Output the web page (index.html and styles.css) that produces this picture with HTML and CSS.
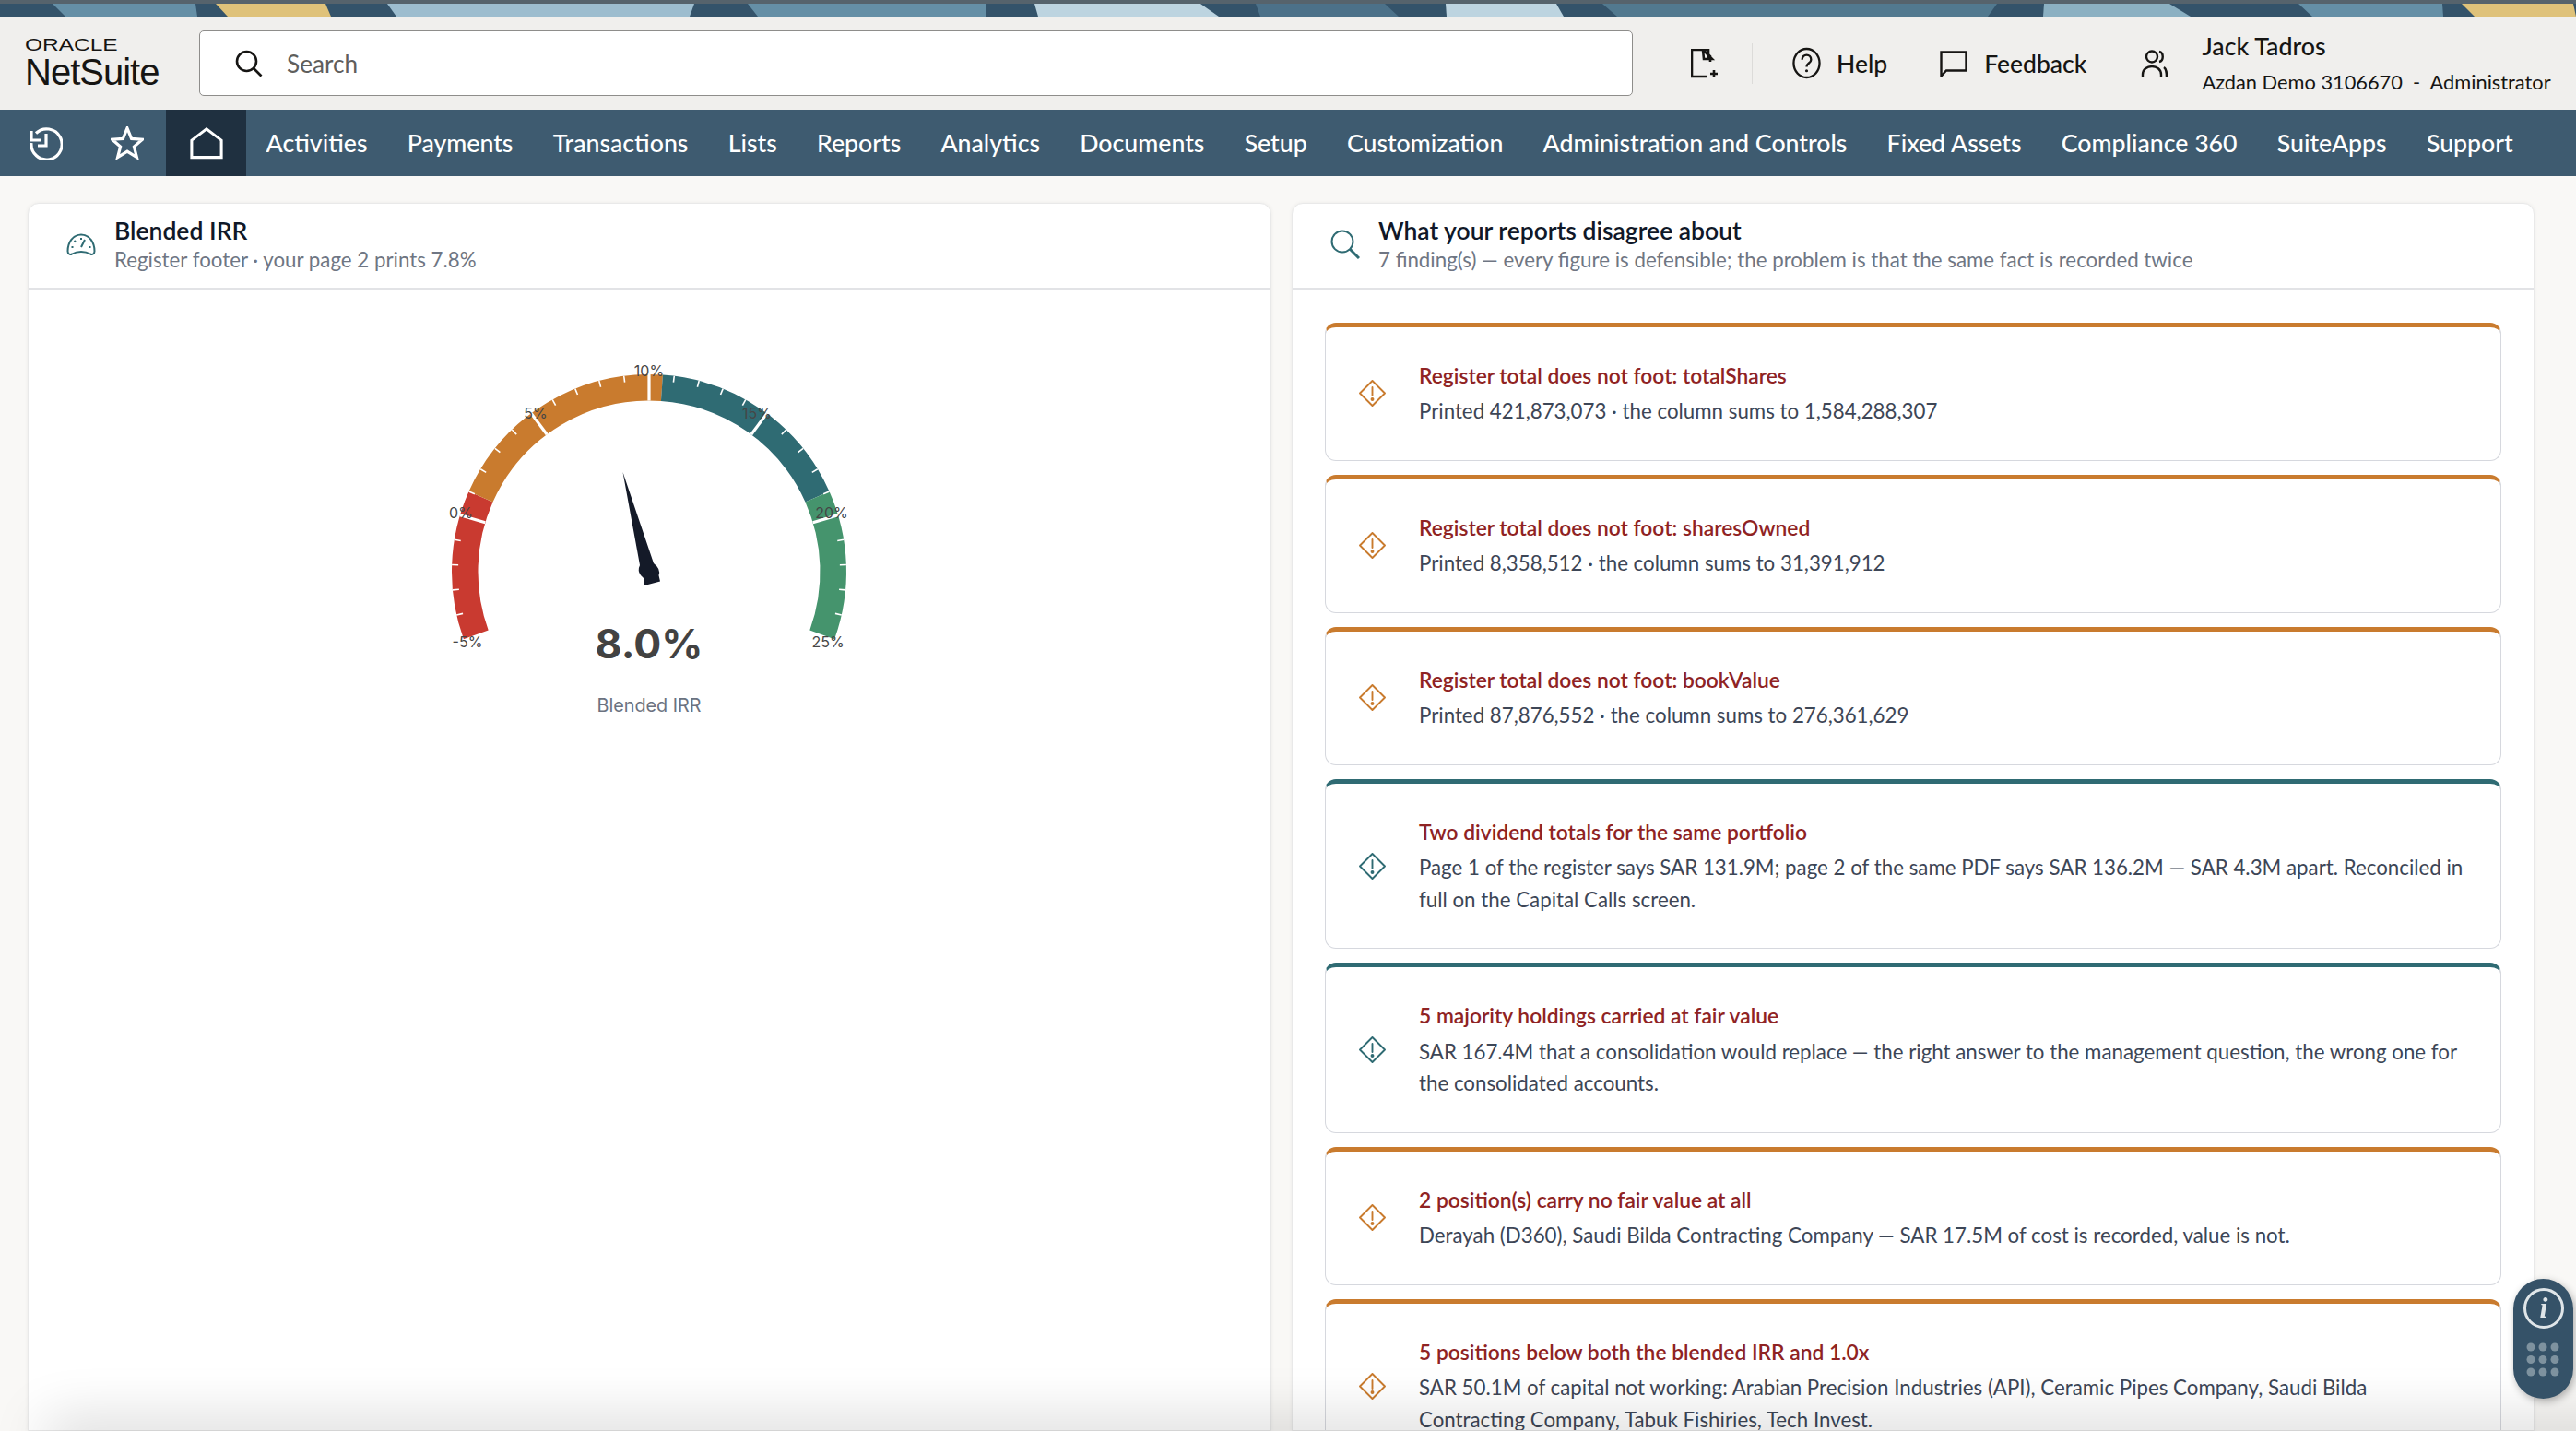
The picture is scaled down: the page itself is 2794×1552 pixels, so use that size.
FILE: index.html
```html
<!DOCTYPE html>
<html lang="en">
<head>
<meta charset="utf-8">
<title>NetSuite - Blended IRR</title>
<link rel="stylesheet" href="styles.css">
</head>
<body>
<svg class="banner" viewBox="0 0 2794 14" preserveAspectRatio="none" aria-hidden="true">
  <rect class="b-dark" width="2794" height="14"/>
  <polygon class="b-mid" points="57,0 71,14 214,14 212,0"/>
  <polygon class="b-yel" points="234,0 247,14 359,14 353,0"/>
  <polygon class="b-lt" points="420,0 430,14 748,14 753,0"/>
  <polygon class="b-mid" points="811,0 822,14 1069,14 1069,0"/>
  <polygon class="b-pale" points="1122,0 1126,14 1322,14 1302,0"/>
  <polygon class="b-deep" points="1362,0 1367,14 1517,14 1502,0"/>
  <polygon class="b-pale" points="1568,0 1569,14 1696,14 1688,0"/>
  <polygon class="b-deep2" points="1738,0 1754,14 2156,14 2166,0"/>
  <polygon class="b-lt2" points="2217,0 2216,14 2376,14 2353,0"/>
  <polygon class="b-mid" points="2493,0 2508,14 2650,14 2649,0"/>
  <polygon class="b-yel" points="2670,0 2684,14 2794,14 2791,0"/>
</svg>

<header class="topbar">
  <div class="logo">
    <span class="logo-oracle">ORACLE</span>
    <span class="logo-netsuite">NetSuite</span>
  </div>
  <div class="search">
    <svg class="search-icon" viewBox="0 0 30 30"><circle cx="12.5" cy="12.5" r="10.5"/><line x1="20" y1="20" x2="28.5" y2="28.5"/></svg>
    <span>Search</span>
  </div>
  <svg class="doc-icon" viewBox="0 0 30 32"><path d="M19 12V1H1v29h17"/><path d="M13 1l10 10h-9z M13 1l8 7v6"/><path class="thick" d="M25 23v8M21 27h8"/></svg>
  <span class="sep"></span>
  <div class="tool help">
    <svg viewBox="0 0 32 36"><ellipse cx="16" cy="18" rx="14.5" ry="16"/><path d="M11 14c0-7 10-7 10 0 0 4-5 4-5 8"/><circle class="dot" cx="16" cy="26.5" r="1.6"/></svg>
    <span>Help</span>
  </div>
  <div class="tool feedback">
    <svg viewBox="0 0 30 30"><path d="M1.5 28.5V2.5h27v20H7z"/></svg>
    <span>Feedback</span>
  </div>
  <svg class="users-icon" viewBox="0 0 30 30"><circle cx="12" cy="7.5" r="6"/><path d="M2 30v-3c0-12 20-12 20 0v3"/><path d="M20 2c5 1 5 10 0 11"/><path d="M25 19c3 2 3 6 3 11"/></svg>
  <div class="user">
    <div class="user-name">Jack Tadros</div>
    <div class="user-role">Azdan Demo 3106670 &nbsp;-&nbsp; Administrator</div>
  </div>
</header>

<nav class="navbar">
  <a class="nav-ico nav-history">
    <svg viewBox="0 0 36 36"><path d="M7 7.5A16.6 16.6 0 1 1 2 18"/><path d="M2 5v10h10"/><path d="M18 8v13H9" /></svg>
  </a>
  <a class="nav-ico nav-star">
    <svg viewBox="0 0 36 36"><polygon points="18,2 22.6,13.4 34.4,14.2 25.4,22 28.4,33.6 18,27.2 7.6,33.6 10.6,22 1.6,14.2 13.4,13.4"/></svg>
  </a>
  <a class="nav-ico nav-home">
    <svg viewBox="0 0 38 36"><path d="M2 34.5V15L19 2l17 13v19.500z"/></svg>
  </a>
  <a class="nav-item">Activities</a>
  <a class="nav-item">Payments</a>
  <a class="nav-item">Transactions</a>
  <a class="nav-item">Lists</a>
  <a class="nav-item">Reports</a>
  <a class="nav-item">Analytics</a>
  <a class="nav-item">Documents</a>
  <a class="nav-item">Setup</a>
  <a class="nav-item">Customization</a>
  <a class="nav-item">Administration and Controls</a>
  <a class="nav-item">Fixed Assets</a>
  <a class="nav-item">Compliance 360</a>
  <a class="nav-item">SuiteApps</a>
  <a class="nav-item">Support</a>
</nav>

<main class="main">
  <section class="card">
    <div class="card-head">
      <svg class="head-ico" viewBox="0 0 32 24"><path d="M6 22.500c6-3.500 14-3.500 20 0 2 1 4.500 0 4.500-3C30.500 10 25 1.500 16 1.500S1.500 10 1.500 19.500c0 3 2.500 4 4.500 3z"/><path d="M16 15l4-8M16 5v2M8.500 8l1.500 1.500M5.500 15h2M24.500 15h2"/></svg>
      <div>
        <div class="card-title">Blended IRR</div>
        <div class="card-sub">Register footer · your page 2 prints 7.8%</div>
      </div>
    </div>
    <div class="gauge-wrap">
      <svg class="gauge" viewBox="-240 -240 480 420">
        <circle class="arc arc-red" r="199.750" pathLength="360" stroke-dasharray="44 316" transform="rotate(160)"/>
        <circle class="arc arc-orange" r="199.750" pathLength="360" stroke-dasharray="70 290" transform="rotate(204)"/>
        <circle class="arc arc-teal" r="199.750" pathLength="360" stroke-dasharray="62 298" transform="rotate(274)"/>
        <circle class="arc arc-green" r="199.750" pathLength="360" stroke-dasharray="44 316" transform="rotate(336)"/>
        <g class="minor">
          <line y1="-214" y2="-207" transform="rotate(-102.67)"/><line y1="-214" y2="-207" transform="rotate(-95.33)"/><line y1="-214" y2="-207" transform="rotate(-88)"/><line y1="-214" y2="-207" transform="rotate(-80.67)"/>
          <line y1="-214" y2="-207" transform="rotate(-66)"/><line y1="-214" y2="-207" transform="rotate(-58.67)"/><line y1="-214" y2="-207" transform="rotate(-51.33)"/><line y1="-214" y2="-207" transform="rotate(-44)"/>
          <line y1="-214" y2="-207" transform="rotate(-29.33)"/><line y1="-214" y2="-207" transform="rotate(-22)"/><line y1="-214" y2="-207" transform="rotate(-14.67)"/><line y1="-214" y2="-207" transform="rotate(-7.33)"/>
          <line y1="-214" y2="-207" transform="rotate(7.33)"/><line y1="-214" y2="-207" transform="rotate(14.67)"/><line y1="-214" y2="-207" transform="rotate(22)"/><line y1="-214" y2="-207" transform="rotate(29.33)"/>
          <line y1="-214" y2="-207" transform="rotate(44)"/><line y1="-214" y2="-207" transform="rotate(51.33)"/><line y1="-214" y2="-207" transform="rotate(58.67)"/><line y1="-214" y2="-207" transform="rotate(66)"/>
          <line y1="-214" y2="-207" transform="rotate(80.67)"/><line y1="-214" y2="-207" transform="rotate(88)"/><line y1="-214" y2="-207" transform="rotate(95.33)"/><line y1="-214" y2="-207" transform="rotate(102.67)"/>
        </g>
        <g class="major">
          <line y1="-214" y2="-185.500" transform="rotate(-73.33)"/><line y1="-214" y2="-185.500" transform="rotate(-36.67)"/><line y1="-214" y2="-185.500"/><line y1="-214" y2="-185.500" transform="rotate(36.67)"/><line y1="-214" y2="-185.500" transform="rotate(73.33)"/>
        </g>
        <g class="tick-labels">
          <text x="-197" y="75.500">-5%</text><text x="-204" y="-64">0%</text><text x="-123" y="-172">5%</text><text x="0" y="-218">10%</text><text x="117" y="-172">15%</text><text x="198" y="-64">20%</text><text x="194" y="75.500">25%</text>
        </g>
        <path class="needle" d="M-28.500-108L-10-7Q-13-1-9 4L-5 8L-5 15L12 10.500L10.500 4Q13-3 5-9Z"/>
        <text class="gauge-value" x="0" y="78">8.0%</text>
        <text class="gauge-label" x="0" y="145">Blended IRR</text>
      </svg>
    </div>
  </section>

  <section class="card">
    <div class="card-head head-wide">
      <svg class="head-ico search-teal" viewBox="0 0 32 32"><circle cx="13" cy="13" r="11.500"/><line class="thick" x1="21" y1="21" x2="31" y2="31"/></svg>
      <div>
        <div class="card-title">What your reports disagree about</div>
        <div class="card-sub">7 finding(s) — every figure is defensible; the problem is that the same fact is recorded twice</div>
      </div>
    </div>
    <div class="findings">
      <article class="finding warn">
        <svg class="diamond" viewBox="0 0 29 29"><path d="M14.500 1L28 14.500 14.500 28 1 14.500z"/><path d="M14.500 8v9"/><circle cx="14.500" cy="21" r="1"/></svg>
        <div><h3>Register total does not foot: totalShares</h3><p>Printed 421,873,073 · the column sums to 1,584,288,307</p></div>
      </article>
      <article class="finding warn">
        <svg class="diamond" viewBox="0 0 29 29"><path d="M14.500 1L28 14.500 14.500 28 1 14.500z"/><path d="M14.500 8v9"/><circle cx="14.500" cy="21" r="1"/></svg>
        <div><h3>Register total does not foot: sharesOwned</h3><p>Printed 8,358,512 · the column sums to 31,391,912</p></div>
      </article>
      <article class="finding warn">
        <svg class="diamond" viewBox="0 0 29 29"><path d="M14.500 1L28 14.500 14.500 28 1 14.500z"/><path d="M14.500 8v9"/><circle cx="14.500" cy="21" r="1"/></svg>
        <div><h3>Register total does not foot: bookValue</h3><p>Printed 87,876,552 · the column sums to 276,361,629</p></div>
      </article>
      <article class="finding info">
        <svg class="diamond" viewBox="0 0 29 29"><path d="M14.500 1L28 14.500 14.500 28 1 14.500z"/><path d="M14.500 8v9"/><circle cx="14.500" cy="21" r="1"/></svg>
        <div><h3>Two dividend totals for the same portfolio</h3><p>Page 1 of the register says SAR 131.9M; page 2 of the same PDF says SAR 136.2M — SAR 4.3M apart. Reconciled in full on the Capital Calls screen.</p></div>
      </article>
      <article class="finding info">
        <svg class="diamond" viewBox="0 0 29 29"><path d="M14.500 1L28 14.500 14.500 28 1 14.500z"/><path d="M14.500 8v9"/><circle cx="14.500" cy="21" r="1"/></svg>
        <div><h3>5 majority holdings carried at fair value</h3><p>SAR 167.4M that a consolidation would replace — the right answer to the management question, the wrong one for the consolidated accounts.</p></div>
      </article>
      <article class="finding warn">
        <svg class="diamond" viewBox="0 0 29 29"><path d="M14.500 1L28 14.500 14.500 28 1 14.500z"/><path d="M14.500 8v9"/><circle cx="14.500" cy="21" r="1"/></svg>
        <div><h3>2 position(s) carry no fair value at all</h3><p>Derayah (D360), Saudi Bilda Contracting Company — SAR 17.5M of cost is recorded, value is not.</p></div>
      </article>
      <article class="finding warn">
        <svg class="diamond" viewBox="0 0 29 29"><path d="M14.500 1L28 14.500 14.500 28 1 14.500z"/><path d="M14.500 8v9"/><circle cx="14.500" cy="21" r="1"/></svg>
        <div><h3>5 positions below both the blended IRR and 1.0x</h3><p>SAR 50.1M of capital not working: Arabian Precision Industries (API), Ceramic Pipes Company, Saudi Bilda Contracting Company, Tabuk Fishiries, Tech Invest.</p></div>
      </article>
    </div>
  </section>
</main>

<div class="bottom-shadow"></div>

<aside class="assist">
  <svg viewBox="0 0 65 130">
    <circle class="assist-ring" cx="33" cy="32" r="20.500"/>
    <text class="assist-i" x="33" y="42">i</text>
    <g class="assist-dots">
      <circle cx="19" cy="74" r="4.500"/><circle cx="32" cy="74" r="4.500"/><circle cx="45" cy="74" r="4.500"/>
      <circle cx="19" cy="87.500" r="4.500"/><circle cx="32" cy="87.500" r="4.500"/><circle cx="45" cy="87.500" r="4.500"/>
      <circle cx="19" cy="101" r="4.500"/><circle cx="32" cy="101" r="4.500"/><circle cx="45" cy="101" r="4.500"/>
    </g>
  </svg>
</aside>
</body>
</html>
```

FILE: styles.css
```css
* { box-sizing: border-box; }
html, body { height: 100%; }
body {
  margin: 0;
  height: 100vh;
  overflow: hidden;
  display: flex;
  flex-direction: column;
  background: #f9f8f6;
  font-family: "Lato", "Liberation Sans", sans-serif;
  color: #161513;
  border-top: 4px solid #56636c;
}

.banner { display: block; width: 100%; height: 14px; flex: none; }
.b-dark { fill: #34536a; }
.b-mid { fill: #658fa6; }
.b-yel { fill: #dfc27a; }
.b-lt { fill: #9dbdcf; }
.b-lt2 { fill: #8bb0c2; }
.b-pale { fill: #bdd4e0; }
.b-deep { fill: #4c7189; }
.b-deep2 { fill: #52798f; }

.topbar {
  flex: none;
  height: 101px;
  display: flex;
  align-items: center;
  background: #f0efed;
  padding-left: 27px;
}
.logo { width: 189px; display: flex; flex-direction: column; }
.logo-oracle {
  font-family: "Liberation Sans", sans-serif;
  font-size: 18px;
  line-height: 18px;
  transform: scaleX(1.36);
  transform-origin: left center;
  letter-spacing: 0;
}
.logo-netsuite {
  font-family: "Liberation Sans", sans-serif;
  font-size: 40px;
  line-height: 40px;
  letter-spacing: -1px;
}
.search {
  width: 1555px;
  height: 71px;
  background: #fff;
  border: 1.5px solid #8e8d8b;
  border-radius: 5px;
  display: flex;
  align-items: center;
  padding-left: 38px;
  gap: 26px;
  color: #5f5e5c;
  font-size: 26.200px;
}
.search-icon { width: 30px; height: 30px; fill: none; stroke: #161513; stroke-width: 2.6; }
.doc-icon { width: 30px; height: 32px; margin-left: 63px; fill: none; stroke: #161513; stroke-width: 2.6; }
.doc-icon .thick { stroke-width: 2.6; }
.sep { width: 1px; height: 44px; background: #dcdbd9; margin-left: 36px; }
.tool { display: flex; align-items: center; font-size: 26.500px; font-weight: 500; }
.tool svg { fill: none; stroke: #161513; stroke-width: 2.4; }
.help { margin-left: 43px; gap: 17px; }
.help svg { width: 31px; height: 35px; }
.help .dot { fill: #161513; stroke: none; }
.feedback { margin-left: 57px; gap: 18px; }
.feedback svg { width: 30px; height: 30px; }
.users-icon { width: 30px; height: 30px; margin-left: 59px; fill: none; stroke: #161513; stroke-width: 2.4; }
.user { margin-left: 36px; white-space: nowrap; }
.user-name { font-size: 26.800px; line-height: 34px; font-weight: 500; }
.user-role { font-size: 21.800px; line-height: 30px; margin-top: 7px; }

.navbar {
  flex: none;
  height: 72px;
  display: flex;
  align-items: stretch;
  background: #3e5b70;
  color: #fff;
  white-space: nowrap;
}
.nav-ico {
  width: 87px;
  display: flex;
  align-items: center;
  justify-content: center;
}
.nav-history { width: 93px; padding-left: 7px; }
.nav-star { padding-left: 3px; }
.nav-ico svg { width: 36px; height: 36px; fill: none; stroke: #fff; stroke-width: 3.2; }
.nav-home { background: #1f3040; }
.nav-item {
  display: flex;
  align-items: center;
  padding: 0 21.600px;
  font-size: 26.700px;
  font-weight: 500;
}

.main {
  flex: 1;
  min-height: 0;
  display: grid;
  grid-template-columns: 1349px 1348px;
  gap: 22px;
  padding: 29px 0 0 30px;
  align-items: stretch;
}
.card {
  background: #fff;
  border: 1px solid #e9e9e9;
  border-radius: 12px 12px 0 0;
  box-shadow: 0 0 4px rgba(0, 0, 0, .06);
  overflow: hidden;
  min-height: 0;
}
.card-head {
  height: 93px;
  border-bottom: 2px solid #e2e3e6;
  display: flex;
  align-items: center;
  padding: 0 0 4px 41px;
  gap: 20px;
}
.head-ico { width: 32px; height: 24px; flex: none; fill: none; stroke: #2f6b73; stroke-width: 2; }
.search-teal { height: 32px; }
.search-teal .thick { stroke-width: 3; }
.card-title { font-size: 26.500px; line-height: 33px; font-weight: 600; color: #101828; }
.card-sub { font-size: 22.300px; line-height: 29px; color: #6f7683; }

.gauge-wrap { display: flex; justify-content: center; padding: 66px 1px 0 0; }
.gauge { width: 480px; height: 420px; display: block; }
.arc { fill: none; stroke-width: 28.500; }
.arc-red { stroke: #c93a30; }
.arc-orange { stroke: #c97b2e; }
.arc-teal { stroke: #2f6b73; }
.arc-green { stroke: #45946d; }
.minor line { stroke: #fff; stroke-width: 1.600; }
.major line { stroke: #fff; stroke-width: 3.200; }
.tick-labels text {
  font-family: "Inter", sans-serif;
  font-size: 16px;
  fill: #464646;
  text-anchor: middle;
  dominant-baseline: central;
}
.needle { fill: #141a28; }
.gauge-value {
  font-family: "Inter", sans-serif;
  font-size: 44.500px;
  font-weight: 700;
  fill: #424242;
  text-anchor: middle;
  dominant-baseline: central;
}
.gauge-label {
  font-family: "Inter", sans-serif;
  font-size: 19.800px;
  fill: #6b7280;
  text-anchor: middle;
  dominant-baseline: central;
}

.findings {
  padding: 36px 35px 0;
  display: flex;
  flex-direction: column;
  gap: 15px;
}
.finding {
  display: flex;
  align-items: center;
  gap: 36px;
  padding: 35px 36px;
  background: #fff;
  border: 1px solid #d6d8de;
  border-top: 5px solid #c97b2e;
  border-radius: 12px;
}
.finding.info { border-top-color: #2f6b73; }
.diamond { width: 29px; height: 29px; flex: none; fill: none; stroke-width: 1.900; stroke-linejoin: round; stroke-linecap: round; }
.warn .diamond { stroke: #c97b2e; }
.info .diamond { stroke: #2f6b73; }
.warn .diamond circle { fill: #c97b2e; }
.info .diamond circle { fill: #2f6b73; }
.finding h3 { margin: 0 0 5px; font-size: 22.800px; line-height: 34.400px; font-weight: 600; color: #8f2323; }
.finding p { margin: 0; font-size: 22.300px; line-height: 34.560px; color: #3d4656; }

.bottom-shadow {
  position: fixed;
  left: 60px;
  right: -100px;
  top: 100%;
  height: 20px;
  box-shadow: 0 0 60px 10px rgba(0, 0, 0, .18);
  pointer-events: none;
}

.assist {
  position: fixed;
  left: 2726px;
  top: 1387px;
  width: 65px;
  height: 130px;
  border-radius: 33px;
  background: #355268;
  box-shadow: 2px 3px 8px rgba(0, 0, 0, .3);
}
.assist svg { display: block; width: 65px; height: 130px; }
.assist-ring { fill: none; stroke: #dfe5e8; stroke-width: 3; }
.assist-i {
  font-family: "Liberation Serif", serif;
  font-style: italic;
  font-weight: 700;
  font-size: 32px;
  fill: #dfe5e8;
  text-anchor: middle;
}
.assist-dots circle { fill: #7e929f; }
```
